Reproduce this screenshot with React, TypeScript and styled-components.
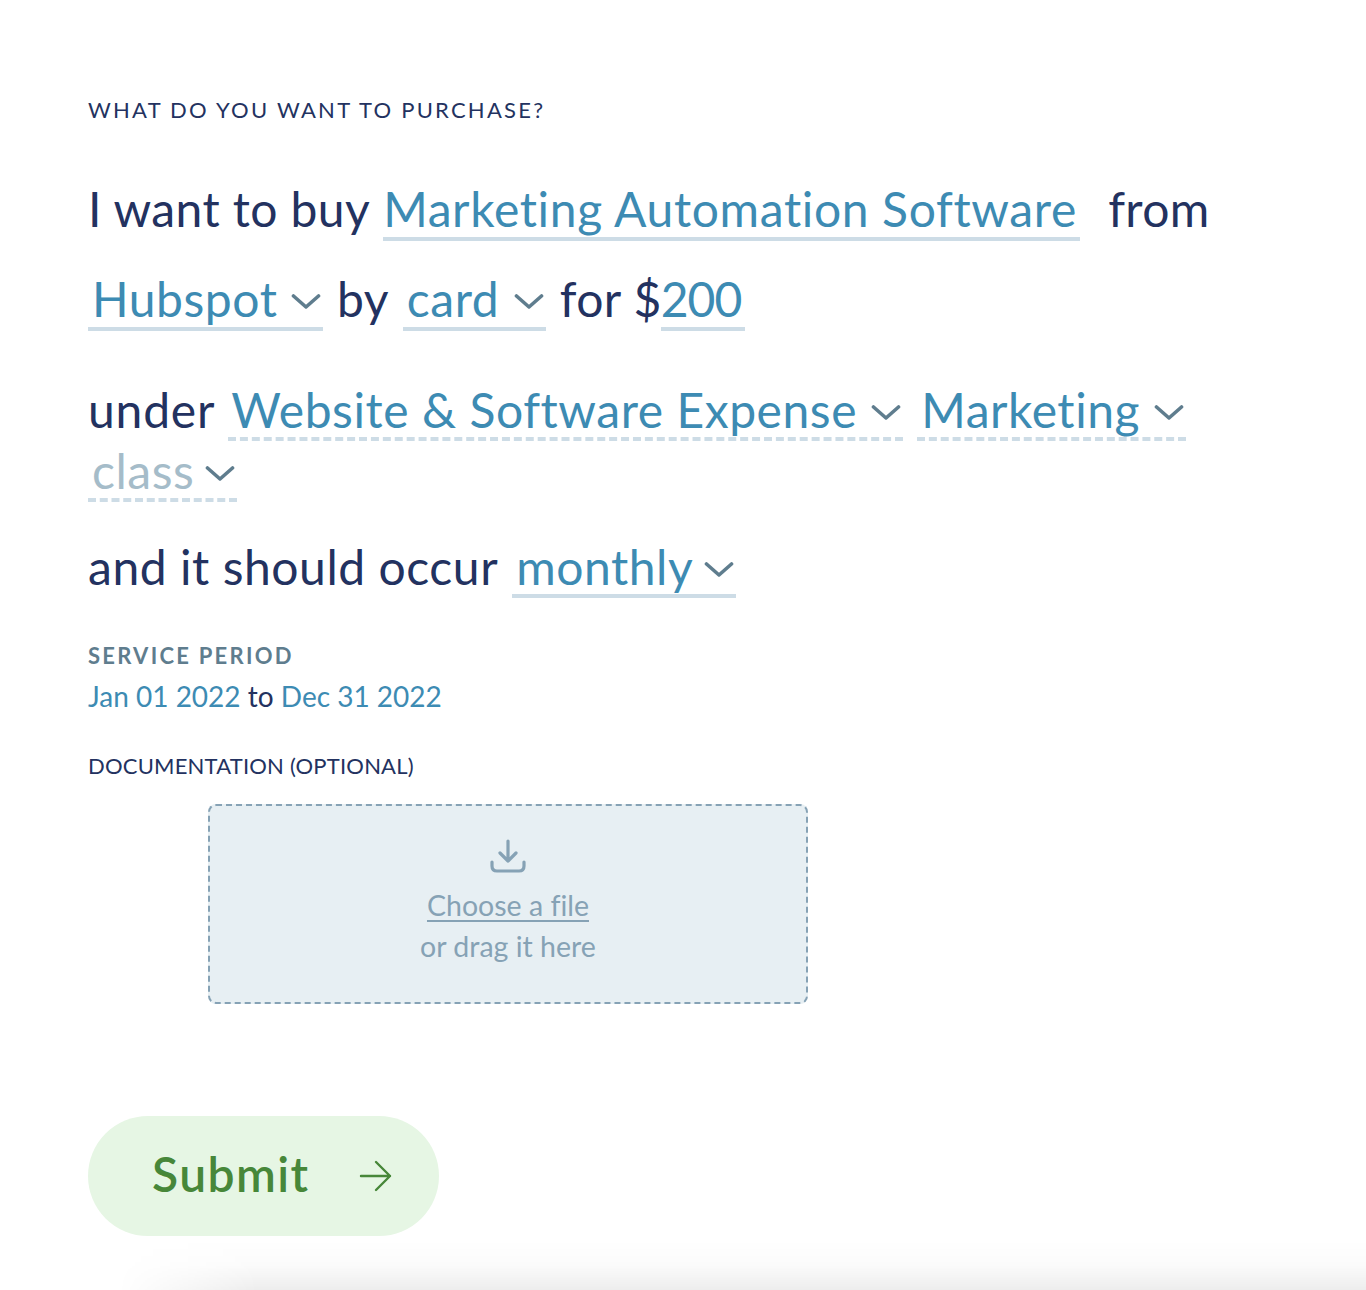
import React from "react";
import styled, { createGlobalStyle } from "styled-components";

const GlobalStyle = createGlobalStyle`
  html, body {
    margin: 0;
    height: 1290px;
    overflow: hidden;
    background: #fff;
  }
  body {
    font-family: Lato, "Open Sans", sans-serif;
    font-variant-ligatures: none;
  }
`;

const Page = styled.div`
  padding: 98px 0 0 88px;
  height: 1290px;
  box-sizing: border-box;
  color: #233260;
`;

const Heading = styled.div`
  font-size: 22px;
  line-height: 24px;
  letter-spacing: 2.24px;
  margin-bottom: 60px;
`;

const Row = styled.div<{ $top?: number }>`
  display: flex;
  align-items: baseline;
  height: 58px;
  margin-top: ${(p) => p.$top ?? 0}px;
  font-size: 48px;
  line-height: 54px;
  letter-spacing: 0.4px;
  white-space: nowrap;
`;

const Words = styled.span<{ $left?: number; $spacing?: number }>`
  margin-left: ${(p) => p.$left ?? 0}px;
  letter-spacing: ${(p) => p.$spacing ?? 0.4}px;
`;

const Field = styled.span<{
  $left?: number;
  $width: number;
  $dashed?: boolean;
  $muted?: boolean;
  $inset?: number;
  $spacing?: number;
  $raised?: boolean;
}>`
  display: inline-flex;
  align-items: baseline;
  justify-content: space-between;
  box-sizing: border-box;
  width: ${(p) => p.$width}px;
  margin-left: ${(p) => p.$left ?? 0}px;
  padding: 0 2px ${(p) => (p.$raised ? 1 : 0)}px ${(p) => p.$inset ?? 4}px;
  letter-spacing: ${(p) => p.$spacing ?? 0.55}px;
  color: ${(p) => (p.$muted ? "#a5bcc9" : "#3d8bb3")};
  border-bottom: 4px ${(p) => (p.$dashed ? "dashed" : "solid")} #cddce6;
`;

const Chevron = styled.svg`
  width: 30px;
  height: 16px;
  flex: none;
  fill: none;
  stroke: #5f7d8e;
  stroke-width: 3.6;
  stroke-linecap: round;
  stroke-linejoin: round;
  align-self: center;
  margin-top: 3px;
`;

const Arrow = () => (
  <Chevron viewBox="0 0 30 16">
    <path d="M2.5 3 L15 14 L27.5 3" />
  </Chevron>
);

const SubLabel = styled.div`
  margin-top: 44px;
  font-size: 22px;
  line-height: 28px;
  font-weight: 700;
  letter-spacing: 2.25px;
  color: #5f7d8e;
`;

const Dates = styled.div`
  margin-top: 10px;
  font-size: 28px;
  line-height: 32px;
  color: #233260;
`;

const DateValue = styled.span`
  color: #3d8bb3;
`;

const DocLabel = styled.div`
  margin-top: 40px;
  font-size: 22px;
  line-height: 28px;
  letter-spacing: 0.2px;
`;

const DropZone = styled.div`
  box-sizing: border-box;
  width: 600px;
  height: 200px;
  margin: 24px 0 0 120px;
  display: flex;
  flex-direction: column;
  align-items: center;
  padding-top: 32px;
  background: #e7eff3;
  border: 2px dashed #86a2b5;
  border-radius: 8px;
  color: #86a2b5;
  font-size: 28.5px;
  line-height: 41px;
`;

const DropIcon = styled.svg`
  width: 36px;
  height: 36px;
  fill: none;
  stroke: #86a2b5;
  stroke-width: 3.2;
  stroke-linecap: round;
  stroke-linejoin: round;
  margin-bottom: 11px;
`;

const ChooseLink = styled.span`
  text-decoration: underline;
  text-decoration-thickness: 1.5px;
  text-underline-offset: 4px;
`;

const SubmitButton = styled.button`
  display: flex;
  align-items: center;
  box-sizing: border-box;
  width: 351px;
  height: 120px;
  margin-top: 112px;
  padding: 0 0 4px 64px;
  border: 0;
  border-radius: 60px;
  background: #e6f6e4;
  color: #478739;
  font: 600 48px/54px Lato, sans-serif;
  letter-spacing: 1.4px;
`;

const ButtonArrow = styled.svg`
  width: 33px;
  height: 34px;
  margin: 4px 0 0 50px;
  fill: none;
  stroke: #478739;
  stroke-width: 2.4;
  stroke-linecap: round;
  stroke-linejoin: round;
`;

const ShadowEdge = styled.div`
  margin-top: 4px;
  height: 50px;
  background: linear-gradient(to bottom, rgba(0, 0, 0, 0) 0%, rgba(0, 0, 0, 0.015) 50%, rgba(0, 0, 0, 0.07) 100%);
  mask-image: linear-gradient(to right, transparent 30px, #000 170px);
`;

export default function App() {
  return (
    <>
      <GlobalStyle />
      <Page>
        <Heading>WHAT DO YOU WANT TO PURCHASE?</Heading>

        <Row>
          <Words>I want to buy</Words>
          <Field $left={13} $width={697} $inset={0} $spacing={0.64} $raised>Marketing Automation Software</Field>
          <Words $left={28}>from</Words>
        </Row>

        <Row $top={32}>
          <Field $width={235} $raised>Hubspot <Arrow /></Field>
          <Words $left={14}>by</Words>
          <Field $left={14} $width={143} $raised>card <Arrow /></Field>
          <Words $left={14}>for $</Words>
          <Field $left={-1} $width={84} $inset={0} $spacing={-0.9} $raised>200</Field>
        </Row>

        <Row $top={53}>
          <Words $spacing={0.8}>under</Words>
          <Field $left={13} $width={675} $inset={3} $dashed>Website &amp; Software Expense <Arrow /></Field>
          <Field $left={14} $width={269} $dashed>Marketing <Arrow /></Field>
        </Row>
        <Row $top={3}>
          <Field $width={149} $dashed $muted>class <Arrow /></Field>
        </Row>

        <Row $top={38}>
          <Words $spacing={0.55}>and it should occur</Words>
          <Field $left={14} $width={224}>monthly <Arrow /></Field>
        </Row>

        <SubLabel>SERVICE PERIOD</SubLabel>
        <Dates>
          <DateValue>Jan 01 2022</DateValue> to <DateValue>Dec 31 2022</DateValue>
        </Dates>

        <DocLabel>DOCUMENTATION (OPTIONAL)</DocLabel>
        <DropZone>
          <DropIcon viewBox="0 0 36 36">
            <path d="M18 3 V23 M10 15 L18 23 L26 15 M2 24 V28 Q2 33 7 33 H29 Q34 33 34 28 V24" />
          </DropIcon>
          <ChooseLink>Choose a file</ChooseLink>
          <span>or drag it here</span>
        </DropZone>

        <SubmitButton>
          Submit
          <ButtonArrow viewBox="0 0 33 34">
            <path d="M2 17 H31 M17 3 L31 17 L17 31" />
          </ButtonArrow>
        </SubmitButton>

        <ShadowEdge />
      </Page>
    </>
  );
}
